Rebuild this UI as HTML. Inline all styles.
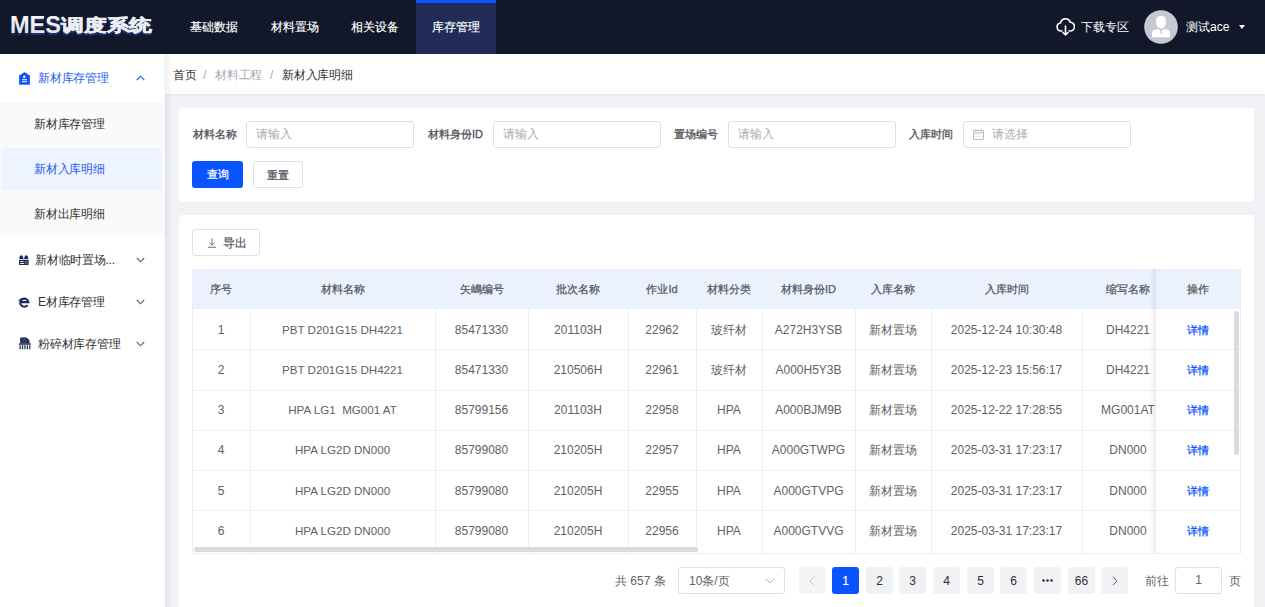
<!DOCTYPE html>
<html><head><meta charset="utf-8">
<style>
*{box-sizing:border-box;margin:0;padding:0}
html,body{width:1265px;height:607px;overflow:hidden}
body{font-family:"Liberation Sans",sans-serif;background:#f0f2f5;color:#303133;position:relative;font-size:12px}
.abs{position:absolute}
#hdr{position:absolute;left:0;top:0;width:1265px;height:54px;background:#121829}
.nav{position:absolute;top:0;height:54px;width:80px;color:#fff;font-size:11.7px;line-height:54px;text-align:center;-webkit-text-stroke:0.15px #fff}
.nav.act{background:#212c57}
.nav.act:before{content:"";position:absolute;left:0;top:0;width:80px;height:3px;background:#0a54ff}
#side{position:absolute;left:0;top:54px;width:165px;height:553px;background:#fff}
.mi{position:absolute;left:0;width:165px;font-size:12px;letter-spacing:-0.25px;color:#303133}
.sub{position:absolute;left:0;top:48px;width:165px;height:133px;background:#fafafa}
#bc{position:absolute;left:165px;top:54px;width:1100px;height:40px;background:#fff}
.card{position:absolute;background:#fff;border-radius:3px}
.lbl{position:absolute;font-size:11px;font-weight:normal;-webkit-text-stroke:0.3px #505359;color:#505359;top:128px;line-height:12px}
.inp{position:absolute;top:121px;height:27px;width:168px;border:1px solid #dcdfe6;border-radius:3px;background:#fff}
.ph{position:absolute;font-size:11.5px;color:#a8abb2;top:6px;left:9px;line-height:12px}
.btn{position:absolute;height:27px;border-radius:3px;font-size:11px;text-align:center;line-height:26px}
.th{position:absolute;top:0;height:40px;background:#ecf2fd;font-size:11px;-webkit-text-stroke:0.25px #55585f;color:#55585f;line-height:40px;text-align:center;border-right:1px solid #dfe5f0}
.row{position:absolute;left:192px;width:1048px;height:40px;border-bottom:1px solid #ebeef5}
.c{position:absolute;height:40px;text-align:center;line-height:40px;font-size:12px;color:#606266;white-space:pre}
.pg{position:absolute;top:567px;width:27px;height:27px;background:#f0f2f5;border-radius:3px;text-align:center;line-height:29px;font-size:12px;color:#303133}
</style></head><body>

<div id="hdr">
  <svg class="abs" style="left:0;top:0" width="165" height="54" viewBox="0 0 165 54">
    <defs><linearGradient id="lg" x1="0" y1="0" x2="0" y2="1"><stop offset="0" stop-color="#ffffff"/><stop offset="1" stop-color="#d9dce6"/></linearGradient></defs>
    <g font-family="Liberation Sans" font-weight="bold">
      <text x="10" y="34.5" font-size="23" textLength="51" lengthAdjust="spacingAndGlyphs" fill="#1d3470">MES</text>
      <text x="61" y="32.5" font-size="17" textLength="91" lengthAdjust="spacingAndGlyphs" fill="#1d3470" stroke="#1d3470" stroke-width="0.5">调度系统</text>
      <text x="10" y="32.5" font-size="23" textLength="51" lengthAdjust="spacingAndGlyphs" fill="url(#lg)">MES</text>
      <text x="61" y="30.5" font-size="17" textLength="91" lengthAdjust="spacingAndGlyphs" fill="url(#lg)" stroke="#eceef3" stroke-width="0.5">调度系统</text>
    </g>
  </svg>
  <div class="nav" style="left:174px">基础数据</div>
  <div class="nav" style="left:255px">材料置场</div>
  <div class="nav" style="left:335px">相关设备</div>
  <div class="nav act" style="left:416px">库存管理</div>
  <svg class="abs" style="left:1056px;top:17px" width="19" height="19" viewBox="0 0 19 19" fill="none" stroke="#fff" stroke-width="1.6" stroke-linecap="round" stroke-linejoin="round">
    <path d="M6 14H5a4 4 0 0 1-.5-7.95A5 5 0 0 1 14.2 5.3 3.9 3.9 0 0 1 14 14h-1"/>
    <path d="M9.5 9v9M7 15.5l2.5 2.5 2.5-2.5"/>
  </svg>
  <div class="abs" style="left:1081px;top:20px;color:#fff;font-size:12px;line-height:14px">下载专区</div>
  <svg class="abs" style="left:1144px;top:10px" width="34" height="34" viewBox="0 0 34 34"><circle cx="17" cy="17" r="16.8" fill="#c6c9d1"/><path d="M12.2 9.5c0-2.2 1.6-3.5 4.8-3.5s4.8 1.3 4.8 3.5v3.6c0 3.3-2.2 5.7-4.8 5.7s-4.8-2.4-4.8-5.7z" fill="#fff"/><path d="M8 27.2v-4.5c0-1.6 1.2-2.8 3-3.2l3.3-.6 2.7 2.6 2.7-2.6 3.3.6c1.8.4 3 1.6 3 3.2v4.5z" fill="#fff"/><path d="M16.3 21.5h1.4l-.3 2.5h-.8z" fill="#b9bcc5"/></svg>
  <div class="abs" style="left:1186px;top:20px;color:#fff;font-size:12px;line-height:14px">测试ace</div>
  <div class="abs" style="left:1239px;top:25px;width:0;height:0;border-left:3px solid transparent;border-right:3px solid transparent;border-top:4px solid #fff"></div>
</div>

<div id="side">
  <div class="sub"></div>
  <div class="abs" style="left:1px;top:94px;width:161px;height:42px;background:#edf3ff;border-radius:4px"></div>
  <svg class="abs" style="left:19px;top:18px" width="11" height="13" viewBox="0 0 11 13"><path d="M5.5 0.2L10.8 3.8V12.4H0.2V3.8z" fill="#0a54ff" stroke="#0a54ff" stroke-width="0.4" stroke-linejoin="round"/><circle cx="5.3" cy="4.8" r="1.2" fill="#fff"/><rect x="3" y="7.2" width="5" height="1" fill="#fff"/><rect x="3" y="9.2" width="5" height="1" fill="#fff"/></svg>
  <div class="mi" style="left:38px;top:17px;color:#2662f5;line-height:14px">新材库存管理</div>
  <svg class="abs" style="left:136px;top:21px" width="9" height="6" viewBox="0 0 9 6" fill="none" stroke="#2662f5" stroke-width="1.1"><path d="M0.8 5L4.5 1.2 8.2 5"/></svg>
  <div class="mi" style="left:34px;top:63px;line-height:14px">新材库存管理</div>
  <div class="mi" style="left:34px;top:108px;line-height:14px;color:#1f5cf3">新材入库明细</div>
  <div class="mi" style="left:34px;top:153px;line-height:14px">新材出库明细</div>

  <svg class="abs" style="left:19px;top:201px" width="10" height="10" viewBox="0 0 10 10"><path d="M0.3 4C0.3 1.5 1.2 0.2 2.3 0.2S4.4 1.5 4.4 4z" fill="#1e2a55"/><path d="M5.2 4C5.2 1.5 6.1 0.2 7.2 0.2S9.3 1.5 9.3 4z" fill="#1e2a55"/><rect x="0" y="4.8" width="9.6" height="5.2" rx="0.6" fill="#1e2a55"/><rect x="1.2" y="6.1" width="3.2" height="0.9" fill="#fff"/><rect x="1.2" y="8" width="3.8" height="0.9" fill="#fff"/><path d="M5.8 6h0.9v0.9h-0.9zM7.6 6h0.9v0.9h-0.9zM6.7 7h0.9v0.9h-0.9zM5.8 8h0.9v0.9h-0.9zM7.6 8h0.9v0.9h-0.9z" fill="#8a93b0"/></svg>
  <div class="mi" style="left:35px;top:199px;line-height:14px">新材临时置场...</div>
  <svg class="abs" style="left:136px;top:203px" width="9" height="6" viewBox="0 0 9 6" fill="none" stroke="#606266" stroke-width="1.1"><path d="M0.8 1L4.5 4.8 8.2 1"/></svg>

  <svg class="abs" style="left:18px;top:242px" width="12" height="12" viewBox="0 0 12 12" fill="none" stroke="#1e2a55"><path d="M3.2 6.1H10.4A4.1 4.1 0 1 0 9.6 9.2" stroke-width="2.1"/><path d="M0.4 5.2C1.4 3.1 3.2 2.2 5 2.3" stroke-width="0.9"/></svg>
  <div class="mi" style="left:38px;top:241px;line-height:14px">E材库存管理</div>
  <svg class="abs" style="left:136px;top:245px" width="9" height="6" viewBox="0 0 9 6" fill="none" stroke="#606266" stroke-width="1.1"><path d="M0.8 1L4.5 4.8 8.2 1"/></svg>

  <svg class="abs" style="left:19px;top:283px" width="12" height="13" viewBox="0 0 12 13"><path d="M1.2 0.5H7.6L10.5 3.2V6.2H1.2z" fill="#1e2a55"/><path d="M3 2h1v1H3zM5 2h1v1H5zM7 2.5h1v1H7zM4 3.5h1v1H4zM6 3.8h1v1H6zM8.5 4h1v1h-1zM3 5h1v.8H3zM5 5h1v.8H5z" fill="#59628a"/><rect x="0" y="6.2" width="11.8" height="1.5" rx="0.3" fill="#1e2a55"/><path d="M0.5 8.2h1.3v4H0.5zM2.9 8.2h1.3v4H2.9zM5.3 8.2h1.3v4H5.3zM7.7 8.2h1.3v4H7.7zM10.1 8.2h1.3v4h-1.3z" fill="#2c3557"/></svg>
  <div class="mi" style="left:38px;top:283px;line-height:14px">粉碎材库存管理</div>
  <svg class="abs" style="left:136px;top:287px" width="9" height="6" viewBox="0 0 9 6" fill="none" stroke="#606266" stroke-width="1.1"><path d="M0.8 1L4.5 4.8 8.2 1"/></svg>
</div>

<div id="bc" style="box-shadow:0 1px 3px rgba(0,21,41,.06)">
  <div class="abs" style="left:8px;top:14px;font-size:12px;letter-spacing:-0.25px;line-height:14px;color:#303133">首页</div>
  <div class="abs" style="left:38px;top:14px;font-size:12px;letter-spacing:-0.25px;line-height:14px;color:#a8abb2">/</div>
  <div class="abs" style="left:50px;top:14px;font-size:12px;letter-spacing:-0.25px;line-height:14px;color:#a8abb2">材料工程</div>
  <div class="abs" style="left:105px;top:14px;font-size:12px;letter-spacing:-0.25px;line-height:14px;color:#a8abb2">/</div>
  <div class="abs" style="left:117px;top:14px;font-size:12px;letter-spacing:-0.25px;line-height:14px;color:#303133">新材入库明细</div>
</div>


<div class="card" style="left:179px;top:108px;width:1075px;height:94px"></div>
<div class="lbl" style="left:193px">材料名称</div>
<div class="inp" style="left:246px"><span class="ph">请输入</span></div>
<div class="lbl" style="left:428px">材料身份ID</div>
<div class="inp" style="left:493px"><span class="ph">请输入</span></div>
<div class="lbl" style="left:674px">置场编号</div>
<div class="inp" style="left:728px"><span class="ph">请输入</span></div>
<div class="lbl" style="left:909px">入库时间</div>
<div class="inp" style="left:963px">
  <svg class="abs" style="left:9px;top:7px" width="11" height="11" viewBox="0 0 11 11" fill="none" stroke="#b1b4bb" stroke-width="0.9"><rect x="0.5" y="1.5" width="10" height="9" rx="0.5"/><path d="M0.5 3.8h10M3 0v2.5M8 0v2.5"/><path d="M2.5 5.5h1M5 5.5h1M7.5 5.5h1M2.5 7.5h1M5 7.5h1M7.5 7.5h1" stroke-width="0.7"/></svg>
  <span class="ph" style="left:28px">请选择</span>
</div>
<div class="btn" style="left:192px;top:161px;width:51px;background:#0a54ff;color:#fff;-webkit-text-stroke:0.25px #fff">查询</div>
<div class="btn" style="left:253px;top:161px;width:50px;background:#fff;border:1px solid #dcdfe6;color:#505359;-webkit-text-stroke:0.25px #505359">重置</div>

<div class="card" style="left:179px;top:215px;width:1075px;height:400px"></div>
<div class="btn" style="left:192px;top:229px;width:68px;background:#fff;border:1px solid #dcdfe6;color:#4a4d55">
  <svg class="abs" style="left:14px;top:8px" width="10" height="10" viewBox="0 0 10 10" fill="none" stroke="#606266" stroke-width="0.9"><path d="M5 0.5v6.5M2.3 4.5L5 7.2 7.7 4.5M1 9.3h8"/></svg>
  <span class="abs" style="left:30px;top:0;font-size:11.5px;-webkit-text-stroke:0.2px #505359;color:#505359">导出</span>
</div>

<div class="abs" style="left:192px;top:269px;width:1049px;height:285px;overflow:hidden;border-left:1px solid #ebeef5;border-right:1px solid #ebeef5">
<div class="abs" style="left:0;top:0;width:1047px;height:40px;background:#ecf2fd"></div>
<div class="th" style="left:-1px;width:59px">序号</div>
<div class="th" style="left:57px;width:186px">材料名称</div>
<div class="th" style="left:242px;width:94px">矢嶋编号</div>
<div class="th" style="left:335px;width:101px">批次名称</div>
<div class="th" style="left:435px;width:69px">作业Id</div>
<div class="th" style="left:503px;width:67px">材料分类</div>
<div class="th" style="left:569px;width:94px">材料身份ID</div>
<div class="th" style="left:662px;width:77px">入库名称</div>
<div class="th" style="left:738px;width:152px">入库时间</div>
<div class="th" style="left:889px;width:93px">缩写名称</div>
<div class="abs" style="left:57px;top:40px;width:1px;height:245px;background:#ebeef5"></div>
<div class="abs" style="left:242px;top:40px;width:1px;height:245px;background:#ebeef5"></div>
<div class="abs" style="left:335px;top:40px;width:1px;height:245px;background:#ebeef5"></div>
<div class="abs" style="left:435px;top:40px;width:1px;height:245px;background:#ebeef5"></div>
<div class="abs" style="left:503px;top:40px;width:1px;height:245px;background:#ebeef5"></div>
<div class="abs" style="left:569px;top:40px;width:1px;height:245px;background:#ebeef5"></div>
<div class="abs" style="left:662px;top:40px;width:1px;height:245px;background:#ebeef5"></div>
<div class="abs" style="left:738px;top:40px;width:1px;height:245px;background:#ebeef5"></div>
<div class="abs" style="left:889px;top:40px;width:1px;height:245px;background:#ebeef5"></div>
<div class="abs" style="left:0;top:80px;width:1047px;height:1px;background:#ebeef5"></div>
<div class="abs" style="left:0;top:121px;width:1047px;height:1px;background:#ebeef5"></div>
<div class="abs" style="left:0;top:161px;width:1047px;height:1px;background:#ebeef5"></div>
<div class="abs" style="left:0;top:201px;width:1047px;height:1px;background:#ebeef5"></div>
<div class="abs" style="left:0;top:241px;width:1047px;height:1px;background:#ebeef5"></div>
<div class="c" style="left:-1px;top:41px;width:58px">1</div>
<div class="c" style="left:57px;top:41px;width:185px;font-size:11.6px">PBT D201G15 DH4221</div>
<div class="c" style="left:242px;top:41px;width:93px">85471330</div>
<div class="c" style="left:335px;top:41px;width:100px">201103H</div>
<div class="c" style="left:435px;top:41px;width:68px">22962</div>
<div class="c" style="left:503px;top:41px;width:66px">玻纤材</div>
<div class="c" style="left:569px;top:41px;width:93px">A272H3YSB</div>
<div class="c" style="left:662px;top:41px;width:76px">新材置场</div>
<div class="c" style="left:738px;top:41px;width:151px">2025-12-24 10:30:48</div>
<div class="c" style="left:889px;top:41px;width:92px">DH4221</div>
<div class="c" style="left:-1px;top:81px;width:58px">2</div>
<div class="c" style="left:57px;top:81px;width:185px;font-size:11.6px">PBT D201G15 DH4221</div>
<div class="c" style="left:242px;top:81px;width:93px">85471330</div>
<div class="c" style="left:335px;top:81px;width:100px">210506H</div>
<div class="c" style="left:435px;top:81px;width:68px">22961</div>
<div class="c" style="left:503px;top:81px;width:66px">玻纤材</div>
<div class="c" style="left:569px;top:81px;width:93px">A000H5Y3B</div>
<div class="c" style="left:662px;top:81px;width:76px">新材置场</div>
<div class="c" style="left:738px;top:81px;width:151px">2025-12-23 15:56:17</div>
<div class="c" style="left:889px;top:81px;width:92px">DH4221</div>
<div class="c" style="left:-1px;top:121px;width:58px">3</div>
<div class="c" style="left:57px;top:121px;width:185px;font-size:11.6px">HPA LG1  MG001 AT</div>
<div class="c" style="left:242px;top:121px;width:93px">85799156</div>
<div class="c" style="left:335px;top:121px;width:100px">201103H</div>
<div class="c" style="left:435px;top:121px;width:68px">22958</div>
<div class="c" style="left:503px;top:121px;width:66px">HPA</div>
<div class="c" style="left:569px;top:121px;width:93px">A000BJM9B</div>
<div class="c" style="left:662px;top:121px;width:76px">新材置场</div>
<div class="c" style="left:738px;top:121px;width:151px">2025-12-22 17:28:55</div>
<div class="c" style="left:889px;top:121px;width:92px">MG001AT</div>
<div class="c" style="left:-1px;top:161px;width:58px">4</div>
<div class="c" style="left:57px;top:161px;width:185px;font-size:11.6px">HPA LG2D DN000</div>
<div class="c" style="left:242px;top:161px;width:93px">85799080</div>
<div class="c" style="left:335px;top:161px;width:100px">210205H</div>
<div class="c" style="left:435px;top:161px;width:68px">22957</div>
<div class="c" style="left:503px;top:161px;width:66px">HPA</div>
<div class="c" style="left:569px;top:161px;width:93px">A000GTWPG</div>
<div class="c" style="left:662px;top:161px;width:76px">新材置场</div>
<div class="c" style="left:738px;top:161px;width:151px">2025-03-31 17:23:17</div>
<div class="c" style="left:889px;top:161px;width:92px">DN000</div>
<div class="c" style="left:-1px;top:202px;width:58px">5</div>
<div class="c" style="left:57px;top:202px;width:185px;font-size:11.6px">HPA LG2D DN000</div>
<div class="c" style="left:242px;top:202px;width:93px">85799080</div>
<div class="c" style="left:335px;top:202px;width:100px">210205H</div>
<div class="c" style="left:435px;top:202px;width:68px">22955</div>
<div class="c" style="left:503px;top:202px;width:66px">HPA</div>
<div class="c" style="left:569px;top:202px;width:93px">A000GTVPG</div>
<div class="c" style="left:662px;top:202px;width:76px">新材置场</div>
<div class="c" style="left:738px;top:202px;width:151px">2025-03-31 17:23:17</div>
<div class="c" style="left:889px;top:202px;width:92px">DN000</div>
<div class="c" style="left:-1px;top:242px;width:58px">6</div>
<div class="c" style="left:57px;top:242px;width:185px;font-size:11.6px">HPA LG2D DN000</div>
<div class="c" style="left:242px;top:242px;width:93px">85799080</div>
<div class="c" style="left:335px;top:242px;width:100px">210205H</div>
<div class="c" style="left:435px;top:242px;width:68px">22956</div>
<div class="c" style="left:503px;top:242px;width:66px">HPA</div>
<div class="c" style="left:569px;top:242px;width:93px">A000GTVVG</div>
<div class="c" style="left:662px;top:242px;width:76px">新材置场</div>
<div class="c" style="left:738px;top:242px;width:151px">2025-03-31 17:23:17</div>
<div class="c" style="left:889px;top:242px;width:92px">DN000</div>
<div class="abs" style="left:957px;top:0;width:6px;height:285px;background:linear-gradient(90deg,rgba(0,0,0,0),rgba(0,0,0,.08))"></div>
<div class="abs" style="left:963px;top:0;width:84px;height:285px;background:#fff">
<div class="abs" style="left:0;top:0;width:84px;height:40px;background:#ecf2fd;font-size:11px;-webkit-text-stroke:0.25px #55585f;color:#55585f;line-height:40px;text-align:center">操作</div>
<div class="abs" style="left:0;top:80px;width:84px;height:1px;background:#ebeef5"></div>
<div class="abs" style="left:0;top:121px;width:84px;height:1px;background:#ebeef5"></div>
<div class="abs" style="left:0;top:161px;width:84px;height:1px;background:#ebeef5"></div>
<div class="abs" style="left:0;top:201px;width:84px;height:1px;background:#ebeef5"></div>
<div class="abs" style="left:0;top:241px;width:84px;height:1px;background:#ebeef5"></div>
<div class="abs" style="left:0;top:41px;width:84px;height:40px;color:#0a54ff;font-size:11px;-webkit-text-stroke:0.25px #0a54ff;text-align:center;line-height:40px">详情</div>
<div class="abs" style="left:0;top:81px;width:84px;height:40px;color:#0a54ff;font-size:11px;-webkit-text-stroke:0.25px #0a54ff;text-align:center;line-height:40px">详情</div>
<div class="abs" style="left:0;top:121px;width:84px;height:40px;color:#0a54ff;font-size:11px;-webkit-text-stroke:0.25px #0a54ff;text-align:center;line-height:40px">详情</div>
<div class="abs" style="left:0;top:161px;width:84px;height:40px;color:#0a54ff;font-size:11px;-webkit-text-stroke:0.25px #0a54ff;text-align:center;line-height:40px">详情</div>
<div class="abs" style="left:0;top:202px;width:84px;height:40px;color:#0a54ff;font-size:11px;-webkit-text-stroke:0.25px #0a54ff;text-align:center;line-height:40px">详情</div>
<div class="abs" style="left:0;top:242px;width:84px;height:40px;color:#0a54ff;font-size:11px;-webkit-text-stroke:0.25px #0a54ff;text-align:center;line-height:40px">详情</div>
</div>
<div class="abs" style="left:1041px;top:42px;width:5px;height:144px;border-radius:3px;background:#d9dbe0"></div>
<div class="abs" style="left:1px;top:278px;width:504px;height:5px;border-radius:3px;background:#d9dbe0"></div>
<div class="abs" style="left:0;top:284px;width:1047px;height:1px;background:#ebeef5"></div>
</div>
<div class="abs" style="left:615px;top:574px;font-size:12px;line-height:14px;color:#606266;white-space:pre">共 657 条</div>
<div class="abs" style="left:678px;top:567px;width:107px;height:27px;border:1px solid #dcdfe6;border-radius:3px;background:#fff"><span class="abs" style="left:10px;top:6px;font-size:12px;line-height:14px;color:#606266">10条/页</span><svg class="abs" style="left:86px;top:10px" width="10" height="6" viewBox="0 0 10 6" fill="none" stroke="#b1b4bb" stroke-width="1"><path d="M0.8 0.8L5 5 9.2 0.8"/></svg></div>
<div class="pg" style="left:799px;background:#f4f5f7"><svg class="abs" style="left:10px;top:9px" width="6" height="10" viewBox="0 0 6 10" fill="none" stroke="#c0c4cc" stroke-width="1"><path d="M5 0.8L1 5 5 9.2"/></svg></div>
<div class="pg" style="left:832px;background:#0a54ff;color:#fff;-webkit-text-stroke:0.2px #fff">1</div>
<div class="pg" style="left:866px">2</div>
<div class="pg" style="left:899px">3</div>
<div class="pg" style="left:933px">4</div>
<div class="pg" style="left:967px">5</div>
<div class="pg" style="left:1000px">6</div>
<div class="pg" style="left:1034px"><svg class="abs" style="left:8px;top:12px" width="11" height="3" viewBox="0 0 11 3" fill="#303133"><circle cx="1.5" cy="1.5" r="1.3"/><circle cx="5.5" cy="1.5" r="1.3"/><circle cx="9.5" cy="1.5" r="1.3"/></svg></div>
<div class="pg" style="left:1068px">66</div>
<div class="pg" style="left:1101px"><svg class="abs" style="left:11px;top:9px" width="6" height="10" viewBox="0 0 6 10" fill="none" stroke="#606266" stroke-width="1"><path d="M1 0.8L5 5 1 9.2"/></svg></div>
<div class="abs" style="left:1145px;top:574px;font-size:12px;line-height:14px;color:#606266">前往</div>
<div class="abs" style="left:1175px;top:567px;width:47px;height:27px;border:1px solid #dcdfe6;border-radius:3px;background:#fff;text-align:center;line-height:25px;font-size:12px;color:#606266">1</div>
<div class="abs" style="left:1229px;top:574px;font-size:12px;line-height:14px;color:#606266">页</div>
<div class="abs" style="left:165px;top:54px;width:7px;height:553px;background:linear-gradient(90deg,rgba(0,21,41,.07),rgba(0,21,41,0));z-index:5"></div>
</body></html>
